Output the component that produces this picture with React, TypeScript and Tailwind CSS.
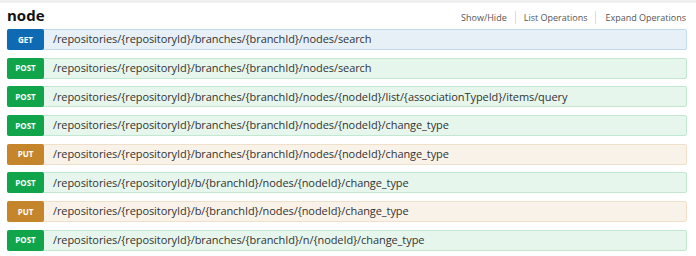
import React from 'react'

const styles = {
  GET: { badge: 'bg-[#0f6ab4]', row: 'bg-[#e7f0f7] border-[#c3d9ec]' },
  POST: { badge: 'bg-[#10a54a]', row: 'bg-[#e7f6ec] border-[#c3e8d1]' },
  PUT: { badge: 'bg-[#c5862b]', row: 'bg-[#f9f2e9] border-[#f0e0ca]' },
}

const ops: { method: 'GET' | 'POST' | 'PUT'; path: string }[] = [
  { method: 'GET', path: '/repositories/{repositoryId}/branches/{branchId}/nodes/search' },
  { method: 'POST', path: '/repositories/{repositoryId}/branches/{branchId}/nodes/search' },
  { method: 'POST', path: '/repositories/{repositoryId}/branches/{branchId}/nodes/{nodeId}/list/{associationTypeId}/items/query' },
  { method: 'POST', path: '/repositories/{repositoryId}/branches/{branchId}/nodes/{nodeId}/change_type' },
  { method: 'PUT', path: '/repositories/{repositoryId}/branches/{branchId}/nodes/{nodeId}/change_type' },
  { method: 'POST', path: '/repositories/{repositoryId}/b/{branchId}/nodes/{nodeId}/change_type' },
  { method: 'PUT', path: '/repositories/{repositoryId}/b/{branchId}/nodes/{nodeId}/change_type' },
  { method: 'POST', path: '/repositories/{repositoryId}/branches/{branchId}/n/{nodeId}/change_type' },
]

export default function App() {
  return (
    <div className="w-[696px] h-[256px] bg-white overflow-hidden" style={{ fontFamily: '"Open Sans", sans-serif' }}>
      <div className="h-[3px] bg-[#f0f0f0]" />
      <div className="px-[7px]">
        {/* Resource heading */}
        <div className="flex items-end justify-between h-[23px]">
          <h2 className="text-[15px] font-bold text-[#111] leading-none pb-[3px]">node</h2>
          <ul className="flex items-center text-[9px] text-[#555] pb-[2px] pr-[3px]">
            <li className="pr-[8px] border-r border-[#ddd]">Show/Hide</li>
            <li className="px-[8px] border-r border-[#ddd]">List Operations</li>
            <li className="pl-[9px]">Expand Operations</li>
          </ul>
        </div>

        {/* Operations */}
        <div className="flex flex-col gap-[7.7px] mt-[3px] pr-[2px]">
          {ops.map((op, i) => (
            <div key={i} className={`flex items-center h-[21px] border rounded-[2px] ${styles[op.method].row}`}>
              <span
                className={`${styles[op.method].badge} -ml-px h-[21px] w-[37px] flex items-center justify-center rounded-[2px] text-white text-[8px] font-bold`}
              >
                {op.method}
              </span>
              <span className="ml-[9px] text-[11px] text-[#333] tracking-[-0.08px]">{op.path}</span>
            </div>
          ))}
        </div>
      </div>
    </div>
  )
}
